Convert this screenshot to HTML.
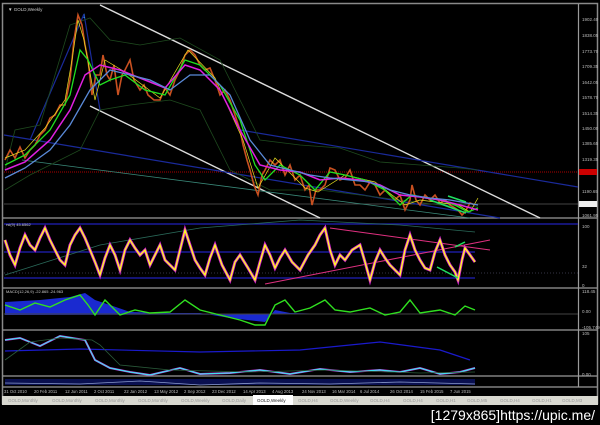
<!DOCTYPE html>
<html><head><style>
html,body{margin:0;padding:0;background:#000;width:600px;height:425px;overflow:hidden}
svg{display:block}
text{font-family:"Liberation Sans",sans-serif}
</style></head><body>
<svg width="600" height="425" viewBox="0 0 600 425">
<rect width="600" height="425" fill="#000"/>
<rect x="2.5" y="3.5" width="595" height="400" fill="none" stroke="#8a8a8a" stroke-width="1.5"/>
<g stroke="#9a9a9a" stroke-width="1.2" fill="none">
<line x1="3" y1="218" x2="597" y2="218"/>
<line x1="3" y1="288" x2="597" y2="288"/>
<line x1="3" y1="330" x2="597" y2="330"/>
<line x1="3" y1="376" x2="597" y2="376"/>
<line x1="3" y1="387" x2="597" y2="387"/>
<line x1="578.5" y1="4" x2="578.5" y2="387"/>
</g>
<g fill="#bbb" font-size="4.5">
<text x="582" y="21">1902.40</text><text x="582" y="37">1838.05</text><text x="582" y="53">1773.70</text>
<text x="582" y="68">1709.35</text><text x="582" y="84">1642.05</text><text x="582" y="99">1578.70</text>
<text x="582" y="115">1514.35</text><text x="582" y="130">1450.00</text><text x="582" y="145">1385.65</text>
<text x="582" y="161">1319.35</text><text x="582" y="193">1190.65</text><text x="582" y="217">1061.95</text>
<text x="582" y="228">100</text><text x="582" y="268">32</text><text x="582" y="287">0</text>
<text x="582" y="293">118.45</text><text x="582" y="313">0.00</text><text x="582" y="329">-105.749</text>
<text x="582" y="335">105</text><text x="582" y="376">0.00</text>
</g>
<rect x="579" y="169" width="18" height="6" fill="#c00"/>
<rect x="579" y="201" width="18" height="6" fill="#eee"/>
<line x1="4" y1="172" x2="578" y2="172" stroke="#a00" stroke-dasharray="1,1"/>
<line x1="4" y1="204" x2="578" y2="204" stroke="#888" stroke-width="0.6"/>
<text x="8" y="11" fill="#ccc" font-size="4.5">▼ GOLD,Weekly</text>
<g stroke="#ddd" stroke-width="1.4" fill="none">
<line x1="100" y1="5" x2="540" y2="218"/>
<line x1="90" y1="106" x2="320" y2="218"/>
</g>
<g stroke="#1a2a9a" stroke-width="1.2" fill="none">
<line x1="4" y1="135" x2="500" y2="218"/>
<line x1="240" y1="130" x2="578" y2="187"/>
<line x1="84" y1="14" x2="30" y2="140"/>
<line x1="84" y1="14" x2="100" y2="110"/>
</g>
<line x1="22" y1="160" x2="470" y2="218" stroke="#3a8a7a" stroke-width="0.8"/>
<polyline fill="none" stroke="#1e4a1e" stroke-width="0.8" points="5,170 15,130 40,125 70,25 90,18 110,40 140,45 180,38 220,60 240,100 260,140 300,145 340,148 380,162 420,165 460,168 478,170"/>
<polyline fill="none" stroke="#1e4a1e" stroke-width="0.8" points="5,190 30,175 60,160 80,150 100,110 130,105 170,100 200,110 230,170 270,190 320,190 360,195 400,200 440,205 478,207"/>
<polyline fill="none" stroke="#c85020" stroke-width="1.6" points="5,160 10,150 15,158 20,147 25,158 30,150 35,145 40,135 45,130 50,118 55,115 60,105 65,105 70,80 74,40 78,15 82,25 85,45 88,60 92,95 96,75 100,75 103,55 107,75 110,80 114,65 118,95 122,75 125,70 130,60 134,80 140,90 144,85 148,95 154,100 160,100 165,88 170,95 175,80 180,70 185,55 190,50 195,55 200,65 205,70 210,68 215,80 220,95 225,90 230,100 235,115 240,130 243,145 247,160 250,170 254,185 258,195 262,175 265,170 270,160 275,165 280,160 285,175 290,165 295,180 300,175 305,190 309,185 312,205 316,190 320,190 325,185 330,168 335,170 340,180 345,178 350,170 355,185 360,185 365,190 370,182 375,185 380,195 385,190 390,195 395,200 400,195 405,210 410,200 412,185 416,200 420,205 425,195 430,200 435,195 440,203 445,200 450,205 455,208 458,210 462,215 465,212 470,203 475,205"/>
<polyline fill="none" stroke="#e8e020" stroke-width="0.7" points="5,158 25,150 45,128 65,100 72,60 78,20 84,40 95,100 105,60 125,72 160,98 188,50 215,78 243,140 258,188 275,158 305,188 318,192 345,175 375,182 405,205 420,200 458,205 470,212 478,198"/>
<polyline fill="none" stroke="#20e020" stroke-width="1.3" points="5,165 25,155 50,130 70,95 80,50 88,60 100,85 110,80 125,75 145,90 165,95 185,60 200,65 220,85 240,120 255,165 265,180 280,165 300,175 315,190 330,172 345,175 365,180 385,190 400,205 412,195 425,198 440,200 455,205 468,212 478,208"/>
<polyline fill="none" stroke="#e020e0" stroke-width="1.5" points="5,170 25,162 50,140 70,110 85,75 100,65 120,70 145,80 165,88 185,65 200,70 220,90 240,130 260,165 280,170 300,172 320,180 340,178 360,180 380,185 400,195 420,197 440,200 460,205 478,210"/>
<polyline fill="none" stroke="#5a8ad8" stroke-width="1.3" points="5,178 25,168 50,150 70,125 90,90 110,70 130,75 150,80 170,90 190,75 210,75 230,95 250,140 270,165 290,170 310,175 330,178 350,180 370,182 390,190 410,195 430,198 450,200 478,205"/>
<polyline fill="none" stroke="#20e060" stroke-width="1.6" points="448,196 466,202"/>
<polyline fill="none" stroke="#20e060" stroke-width="1.6" points="430,200 466,213"/>
<text x="84" y="18" fill="#3af" font-size="8" text-anchor="middle">↓</text>
<g fill="none">
<line x1="4" y1="224" x2="578" y2="224" stroke="#1a1a9a" stroke-width="1.4"/>
<line x1="4" y1="252" x2="475" y2="252" stroke="#1a1a9a" stroke-width="1.4"/>
<line x1="4" y1="278" x2="475" y2="278" stroke="#1a1a9a" stroke-width="1.4"/>
<line x1="4" y1="273" x2="578" y2="273" stroke="#334" stroke-dasharray="1,2"/>
<polyline stroke="#2a6a5a" stroke-width="0.8" points="5,275 100,245 200,228 300,220 400,225 475,232"/>
<line x1="330" y1="228" x2="490" y2="250" stroke="#e03080" stroke-width="1"/>
<line x1="265" y1="284" x2="490" y2="240" stroke="#e03080" stroke-width="1"/>
<polyline stroke="#d020d0" stroke-width="3" points="5,240 10,255 15,265 20,248 25,235 30,245 35,250 40,238 45,228 50,240 55,250 60,260 65,265 70,245 75,235 80,228 85,238 90,250 95,262 100,275 105,258 110,245 115,255 120,270 125,250 130,240 135,248 140,255 145,250 150,265 155,255 160,245 165,260 175,270 180,250 185,230 190,245 195,260 200,268 205,275 210,258 215,245 222,265 230,280 235,262 240,255 248,268 255,280 260,262 265,245 270,255 275,268 280,258 285,250 292,262 300,270 308,255 315,245 320,235 325,228 330,250 335,265 340,255 345,260 352,250 360,245 365,262 370,280 375,262 380,250 385,258 390,265 395,270 400,275 405,250 410,235 415,250 420,260 425,268 430,270 435,252 440,240 445,255 450,265 455,272 458,280 462,260 465,248 470,255 475,262"/>
<polyline stroke="#ffff20" stroke-width="1.4" points="5,240 10,255 15,265 20,248 25,235 30,245 35,250 40,238 45,228 50,240 55,250 60,260 65,265 70,245 75,235 80,228 85,238 90,250 95,262 100,275 105,258 110,245 115,255 120,270 125,250 130,240 135,248 140,255 145,250 150,265 155,255 160,245 165,260 175,270 180,250 185,230 190,245 195,260 200,268 205,275 210,258 215,245 222,265 230,280 235,262 240,255 248,268 255,280 260,262 265,245 270,255 275,268 280,258 285,250 292,262 300,270 308,255 315,245 320,235 325,228 330,250 335,265 340,255 345,260 352,250 360,245 365,262 370,280 375,262 380,250 385,258 390,265 395,270 400,275 405,250 410,235 415,250 420,260 425,268 430,270 435,252 440,240 445,255 450,265 455,272 458,280 462,260 465,248 470,255 475,262"/>
<line x1="437" y1="267" x2="458" y2="278" stroke="#20e060" stroke-width="1.5"/>
<line x1="455" y1="247" x2="465" y2="242" stroke="#20e060" stroke-width="1.5"/>
</g>
<text x="6" y="226" fill="#ccc" font-size="4">rsi(9) 45.6562</text>
<path d="M5,315 L5,302 40,300 70,297 85,293 95,300 110,305 130,312 170,313 200,313 230,318 265,322 275,310 290,313 330,314 478,314 Z" fill="#1a2ad0"/>
<line x1="4" y1="314" x2="578" y2="314" stroke="#444"/>
<polyline fill="none" stroke="#30e020" stroke-width="1.4" points="5,305 20,310 35,303 50,307 65,300 80,295 88,305 95,315 105,300 120,315 135,310 150,313 170,312 185,300 200,310 220,315 240,320 255,325 265,325 275,305 285,300 295,312 310,308 325,300 335,310 350,312 370,308 385,315 400,312 410,300 420,313 440,310 455,315 465,306 475,310"/>
<text x="6" y="293" fill="#ccc" font-size="4">MACD(12,26,9) -22.865 -24.963</text>
<polyline fill="none" stroke="#1a1acc" stroke-width="1.2" points="5,351 80,349 200,352 300,350 380,342 440,350 470,360"/>
<polyline fill="none" stroke="#d020d0" stroke-width="2" points="5,340 20,338 40,346 60,336 85,340 95,360 110,368 130,372 150,375 180,368 200,374 230,373 260,370 290,374 320,369 350,372 380,370 400,372 420,368 440,374 460,372 475,368"/>
<polyline fill="none" stroke="#40e0f0" stroke-width="1.2" points="5,340 20,338 40,346 60,336 85,340 95,360 110,368 130,372 150,375 180,368 200,374 230,373 260,370 290,374 320,369 350,372 380,370 400,372 420,368 440,374 460,372 475,368"/>
<polyline fill="none" stroke="#2a5a3a" stroke-width="0.8" points="5,360 30,342 60,338 92,340 100,345 120,365 170,370 250,372 330,370 420,373 475,372"/>
<rect x="5" y="379" width="470" height="6" fill="#0a1050"/>
<polyline fill="none" stroke="#8899cc" stroke-width="0.8" points="5,383 80,384 140,381 200,385 260,383 330,384 400,382 475,384"/>
<g fill="#bbb" font-size="4.2">
<text x="4" y="393">31 Oct 2010</text><text x="34" y="393">20 Feb 2011</text><text x="65" y="393">12 Jun 2011</text>
<text x="94" y="393">2 Oct 2011</text><text x="124" y="393">22 Jan 2012</text><text x="154" y="393">13 May 2012</text>
<text x="184" y="393">2 Sep 2012</text><text x="212" y="393">23 Dec 2012</text><text x="243" y="393">14 Apr 2013</text>
<text x="272" y="393">4 Aug 2013</text><text x="302" y="393">24 Nov 2013</text><text x="332" y="393">16 Mar 2014</text>
<text x="360" y="393">6 Jul 2014</text><text x="390" y="393">26 Oct 2014</text><text x="420" y="393">15 Feb 2015</text><text x="450" y="393">7 Jun 2015</text>
</g>
<rect x="2" y="396" width="596" height="9" fill="#d8d8d0"/>
<rect x="253" y="395" width="40" height="10" fill="#fff"/>
<g fill="#999" font-size="4.5">
<text x="8" y="402">GOLD,Monthly</text><text x="52" y="402">GOLD,Monthly</text><text x="95" y="402">GOLD,Monthly</text>
<text x="138" y="402">GOLD,Monthly</text><text x="181" y="402">GOLD,Weekly</text><text x="222" y="402">GOLD,Daily</text>
<text x="257" y="402" fill="#222">GOLD,Weekly</text><text x="298" y="402">GOLD,H4</text><text x="330" y="402">GOLD,Weekly</text>
<text x="370" y="402">GOLD,H4</text><text x="403" y="402">GOLD,H4</text><text x="436" y="402">GOLD,H1</text>
<text x="467" y="402">GOLD,M5</text><text x="500" y="402">GOLD,H4</text><text x="532" y="402">GOLD,H1</text><text x="562" y="402">GOLD,M3</text>
</g>
<text x="595" y="420" fill="#fff" font-size="14" text-anchor="end" font-family="Liberation Mono, monospace">[1279x865]https://upic.me/</text>
</svg>
</body></html>
